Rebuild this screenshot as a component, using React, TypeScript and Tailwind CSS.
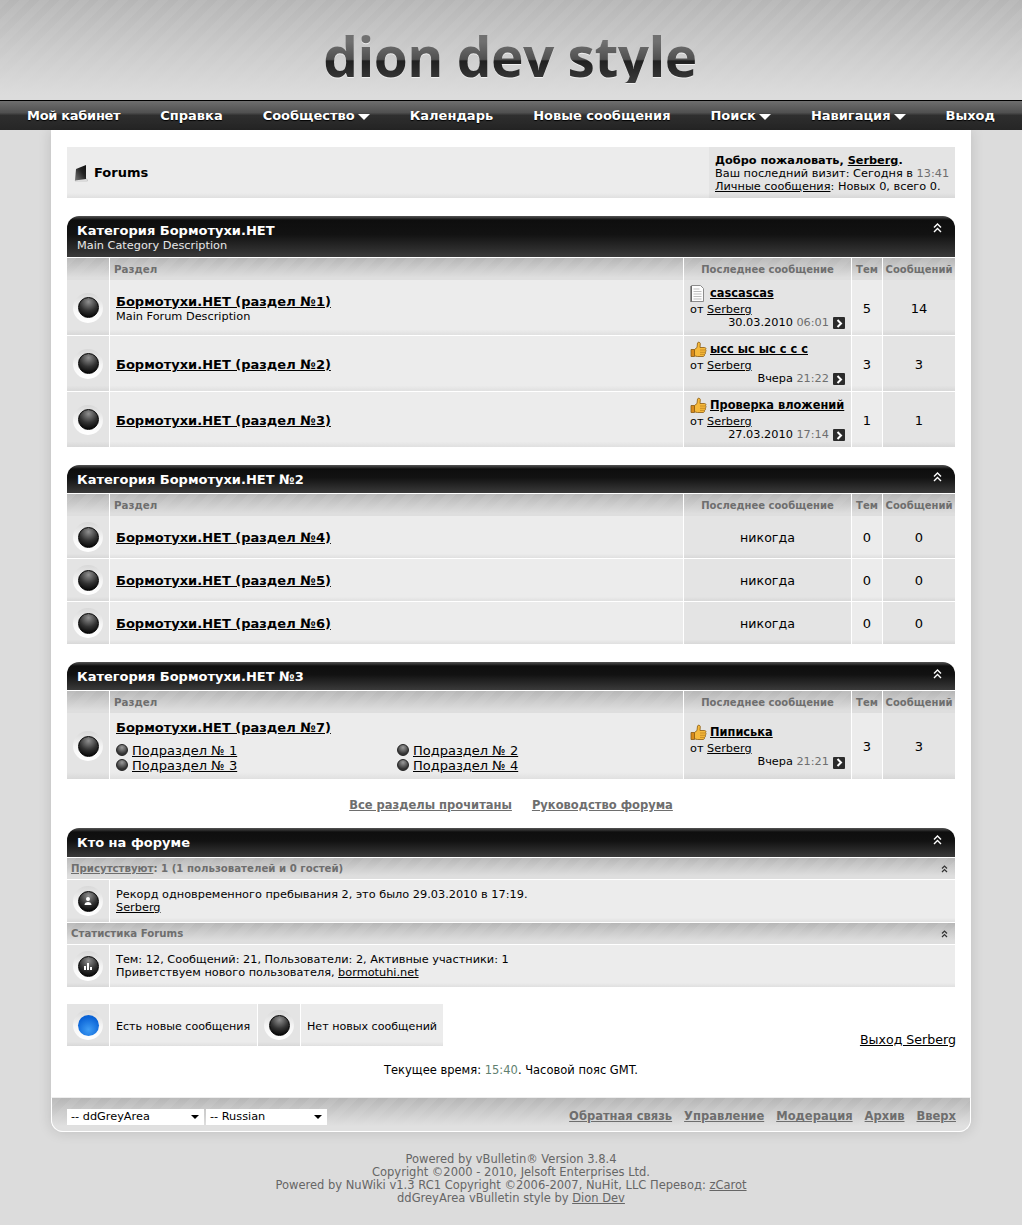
const stripes =
  "bg-[linear-gradient(rgba(220,220,220,0)_0%,rgba(220,220,220,0.6)_55%,#dcdcdc_95%),repeating-linear-gradient(135deg,#bababa_0px,#bababa_7px,#b6b6b6_7px,#b6b6b6_14px)]";
const thBg =
  "bg-[linear-gradient(rgba(224,224,224,0)_0%,#dedede_85%),repeating-linear-gradient(135deg,#bbbbbb_0px,#bbbbbb_7px,#b6b6b6_7px,#b6b6b6_14px)]";

function Ball({ kind = "dark", children }: { kind?: "dark" | "blue"; children?: React.ReactNode }) {
  return (
    <div className="w-[30px] h-[30px] rounded-full bg-[linear-gradient(#d8d8d8,#f6f6f6_55%,#ffffff)] flex items-center justify-center">
      <div
        className={
          kind === "blue"
            ? "w-[21px] h-[21px] rounded-full bg-[radial-gradient(circle_at_50%_70%,#3f9df5,#0a63d6_70%)] flex items-center justify-center"
            : "w-[21px] h-[21px] rounded-full bg-[radial-gradient(circle_at_50%_20%,#8f8f8f,#333333_50%,#080808_85%)] border border-black flex items-center justify-center"
        }
      >
        {children}
      </div>
    </div>
  );
}

function Chevrons({ small }: { small?: boolean }) {
  return small ? (
    <svg width="7" height="8" viewBox="0 0 7 8" fill="none" stroke="currentColor" strokeWidth="1.2">
      <path d="M1 3.500 3.500 1 6 3.500M1 7 3.500 4.500 6 7" />
    </svg>
  ) : (
    <svg width="9" height="10" viewBox="0 0 9 10" fill="none" stroke="currentColor" strokeWidth="1.4">
      <path d="M1 4.500 4.500 1 8 4.500M1 9 4.500 5.500 8 9" />
    </svg>
  );
}

function GoIcon() {
  return (
    <span className="inline-flex w-[12px] h-[12px] bg-[#2b2b2b] items-center justify-center align-[-2px] ml-1 rounded-[1px]">
      <svg width="7" height="9" viewBox="0 0 7 9" fill="none" stroke="#fff" strokeWidth="2">
        <path d="M1.500 1 5 4.500 1.500 8" />
      </svg>
    </span>
  );
}

function Thumb() {
  return (
    <svg width="17" height="17" viewBox="0 0 17 17" className="shrink-0">
      <path d="M1 8.500h3.500v7H1z" fill="#d98a1c" stroke="#8a5a10" strokeWidth="0.8" />
      <path
        d="M4.500 8.500 7 6.500 7.500 2C7.800.8 10 .9 10.300 2.500L10 6.500h4.500c1.500 0 1.900 1.500 1 2.200.8.700.7 2-.2 2.400.5.800.2 1.900-.7 2.200.2 1.100-.5 2.200-1.600 2.200H7.500c-1.200 0-2-.5-3-.8z"
        fill="#f6b93b"
        stroke="#8a5a10"
        strokeWidth="0.8"
      />
      <path d="M10 9h5M10 11.300h5M10 13.400h4" stroke="#b87d1a" strokeWidth="0.7" />
    </svg>
  );
}

function Doc() {
  return (
    <svg width="15" height="17" viewBox="0 0 15 17" className="shrink-0">
      <path d="M1.500.5h9l3 3v13h-12z" fill="#fdfdfd" stroke="#8c8c8c" />
      <path d="M1 1v16" stroke="#444" />
      <path d="M3.500 4h6M3.500 6.500h8M3.500 9h8M3.500 11.500h8M3.500 14h8" stroke="#bdbdbd" />
    </svg>
  );
}

const link = "underline text-black";

function NavItem({ label, drop, tight }: { label: string; drop?: boolean; tight?: boolean }) {
  return (
    <span
      className={`flex items-center gap-[3px] text-white font-bold text-[13px] [text-shadow:0_1px_1px_#000] ${
        tight ? "tracking-[-0.3px]" : ""
      }`}
    >
      {label}
      {drop && <span className="w-0 h-0 border-x-[6px] border-x-transparent border-t-[6px] border-t-white mt-[2px]" />}
    </span>
  );
}

function CatHeader({ title, desc, who }: { title: string; desc?: string; who?: boolean }) {
  return (
    <div
      className={`flex items-start justify-between bg-[linear-gradient(#555_0px,#0e0e0e_4px,#121212_45%,#3a3a3a_100%)] px-[10px] text-white rounded-t-[12px] ${
        desc ? "h-[41px] pt-[7px]" : who ? "h-[29px] pt-[7px]" : "h-[28px] pt-[7px]"
      }`}
    >
      <div>
        <div className="text-[13px] font-bold leading-[15px]">{title}</div>
        {desc && <div className="text-[11.3px] leading-[13px] mt-[1px] text-[#e8e8e8]">{desc}</div>}
      </div>
      <span className="mr-[3px]">
        <Chevrons />
      </span>
    </div>
  );
}

const cols = "grid grid-cols-[42px_573px_167px_30px_72px] gap-x-px";

function HeadRow() {
  return (
    <div className={`${cols} mt-px text-[10px] font-bold text-[#6e6e6e] h-[21px] leading-[23px]`}>
      <div className={thBg} />
      <div className={`${thBg} pl-[4px] text-[10.3px]`}>Раздел</div>
      <div className={`${thBg} text-center`}>Последнее сообщение</div>
      <div className={`${thBg} text-center`}>Тем</div>
      <div className={`${thBg} text-center`}>Сообщений</div>
    </div>
  );
}

const cellLight = "bg-[linear-gradient(#ececec_90%,#e0e0e0)]";
const cellDark = "bg-[linear-gradient(#e4e4e4_90%,#d8d8d8)]";

type Last = { icon: "doc" | "thumb"; title: string; date: string; time: string };

function LastPost({ p, low }: { p: Last; low?: boolean }) {
  return (
    <div className={`h-full flex flex-col justify-center pb-[1px] px-[6px] text-[11.3px] leading-[13px] ${low ? "pt-[2px]" : ""}`}>
      <div className="flex items-center gap-[4px] h-[17px]">
        {p.icon === "doc" ? <Doc /> : <Thumb />}
        <span className={`${link} font-bold text-[11.4px] ${p.icon === "doc" ? "ml-[1px]" : "-ml-[1px]"}`}>{p.title}</span>
      </div>
      <div className="mt-[1px]">
        от <span className={link}>Serberg</span>
      </div>
      <div className="text-right">
        {p.date} <span className="text-[#6e6e6e]">{p.time}</span>
        <GoIcon />
      </div>
    </div>
  );
}

function ForumRow({
  name,
  desc,
  last,
  topics,
  posts,
  h,
  children,
}: {
  name: string;
  desc?: string;
  last?: Last;
  topics: string;
  posts: string;
  h: string;
  children?: React.ReactNode;
}) {
  return (
    <div className={`${cols} mt-px ${h}`}>
      <div className={`${cellDark} flex items-center justify-center`}>
        <Ball />
      </div>
      <div className={`${cellLight} pl-[6px] flex flex-col justify-center ${last && !children ? "pt-[2px]" : ""}`}>
        <div className={`${link} font-bold text-[13px] leading-[15px]`}>{name}</div>
        {desc && <div className="text-[11.3px] leading-[14px] mt-[1px]">{desc}</div>}
        {children}
      </div>
      <div className={cellDark}>
        {last ? (
          <LastPost p={last} low={!!children} />
        ) : (
          <div className="h-full flex items-center justify-center pt-[2px] text-[12.6px]">никогда</div>
        )}
      </div>
      <div className={`${cellLight} flex items-center justify-center pt-[2px] text-[13px]`}>{topics}</div>
      <div className={`${cellDark} flex items-center justify-center pt-[2px] text-[13px]`}>{posts}</div>
    </div>
  );
}

function SubForum({ name }: { name: string }) {
  return (
    <div className="flex items-center gap-[4px] text-[13px] leading-[15px]">
      <span className="w-[12px] h-[12px] rounded-full bg-[radial-gradient(circle_at_50%_25%,#9a9a9a,#333_70%)] border border-[#222]" />
      <span className={link}>{name}</span>
    </div>
  );
}

function SubHead({ children }: { children: React.ReactNode }) {
  return (
    <div className={`mt-px h-[21px] ${thBg} flex items-center justify-between pl-[4px] pr-[7px] text-[10.2px] font-bold text-[#6e6e6e]`}>
      <span>{children}</span>
      <span className="text-[#333]">
        <Chevrons small />
      </span>
    </div>
  );
}

function InfoRow({ icon, children }: { icon: React.ReactNode; children: React.ReactNode }) {
  return (
    <div className="grid grid-cols-[42px_845px] gap-x-px mt-px h-[42px]">
      <div className={`${cellDark} flex items-center justify-center`}>
        <Ball>{icon}</Ball>
      </div>
      <div className={`${cellLight} pl-[6px] flex flex-col justify-center text-[11.3px] leading-[13px]`}>{children}</div>
    </div>
  );
}

export default function App() {
  return (
    <div className="min-h-[1225px] bg-[#dcdcdc] text-black font-['Verdana','DejaVu_Sans',sans-serif]">
      <header className={`h-[100px] flex items-center justify-center ${stripes}`}>
        <h1 className="font-['Open_Sans',sans-serif] font-bold text-[55px] leading-none mt-[10px] mr-[2px] text-transparent bg-clip-text bg-[linear-gradient(#707070_25%,#505050_57%,#202020_60%,#3c3c3c)] [filter:drop-shadow(0_1px_0_#efefef)] tracking-[-0.5px]">
          dion dev style
        </h1>
      </header>
      <nav className="h-[30px] border-t border-black bg-[linear-gradient(#6e6e6e,#505050_40%,#2e2e2e_50%,#262626)] flex items-center justify-between pl-[27px] pr-[27px]">
        <NavItem label="Мой кабинет" tight />
        <NavItem label="Справка" />
        <NavItem label="Сообщество" drop />
        <NavItem label="Календарь" />
        <NavItem label="Новые сообщения" />
        <NavItem label="Поиск" drop />
        <NavItem label="Навигация" drop />
        <NavItem label="Выход" />
      </nav>

      <div className="mx-auto w-[920px]">
        <main className="bg-white rounded-b-[12px] shadow-[0_0_14px_rgba(0,0,0,0.14)] pt-[17px] overflow-hidden">
          <div className="px-[16px]">
            <div className="flex h-[51px] bg-[linear-gradient(#ececec_90%,#e0e0e0)]">
              <div className="flex-1 flex items-center pl-[7px] gap-[6px] text-[13px] font-bold">
                <svg width="14" height="18" viewBox="0 0 14 18">
                  <defs>
                    <linearGradient id="bookFill" x1="0" y1="1" x2="1" y2="0">
                      <stop offset="0" stopColor="#777" />
                      <stop offset="0.6" stopColor="#222" />
                      <stop offset="1" stopColor="#111" />
                    </linearGradient>
                  </defs>
                  <path d="M1 17h12.500l-.5-2H2z" fill="#eee" stroke="#aaa" strokeWidth="0.5" />
                  <path d="M1 16.500 2 5 12 1v14z" fill="url(#bookFill)" />
                </svg>
                Forums
              </div>
              <div className="w-[246px] ml-[2px] bg-[linear-gradient(#e4e4e4_90%,#d8d8d8)] pl-[6px] pt-[7px] text-[11.3px] leading-[13px] whitespace-nowrap">
                <div className="font-bold">
                  Добро пожаловать, <span className={link}>Serberg</span>.
                </div>
                <div>
                  Ваш последний визит: Сегодня в <span className="text-[#6e6e6e]">13:41</span>
                </div>
                <div>
                  <span className={link}>Личные сообщения</span>: Новых 0, всего 0.
                </div>
              </div>
            </div>

            <div className="mt-[18px]">
              <CatHeader title="Категория Бормотухи.НЕТ" desc="Main Category Description" />
              <HeadRow />
              <ForumRow
                h="h-[55px]"
                name="Бормотухи.НЕТ (раздел №1)"
                desc="Main Forum Description"
                topics="5"
                posts="14"
                last={{ icon: "doc", title: "cascascas", date: "30.03.2010", time: "06:01" }}
              />
              <ForumRow
                h="h-[55px]"
                name="Бормотухи.НЕТ (раздел №2)"
                topics="3"
                posts="3"
                last={{ icon: "thumb", title: "ысс ыс ыс с с с", date: "Вчера", time: "21:22" }}
              />
              <ForumRow
                h="h-[55px]"
                name="Бормотухи.НЕТ (раздел №3)"
                topics="1"
                posts="1"
                last={{ icon: "thumb", title: "Проверка вложений", date: "27.03.2010", time: "17:14" }}
              />
            </div>

            <div className="mt-[18px]">
              <CatHeader title="Категория Бормотухи.НЕТ №2" />
              <HeadRow />
              <ForumRow h="h-[42px]" name="Бормотухи.НЕТ (раздел №4)" topics="0" posts="0" />
              <ForumRow h="h-[42px]" name="Бормотухи.НЕТ (раздел №5)" topics="0" posts="0" />
              <ForumRow h="h-[42px]" name="Бормотухи.НЕТ (раздел №6)" topics="0" posts="0" />
            </div>

            <div className="mt-[18px]">
              <CatHeader title="Категория Бормотухи.НЕТ №3" />
              <HeadRow />
              <ForumRow
                h="h-[66px]"
                name="Бормотухи.НЕТ (раздел №7)"
                topics="3"
                posts="3"
                last={{ icon: "thumb", title: "Пиписька", date: "Вчера", time: "21:21" }}
              >
                <div className="grid grid-cols-[281px_1fr] mt-[8px]">
                  <SubForum name="Подраздел № 1" />
                  <SubForum name="Подраздел № 2" />
                  <SubForum name="Подраздел № 3" />
                  <SubForum name="Подраздел № 4" />
                </div>
              </ForumRow>
            </div>

            <div className="flex justify-center gap-[20px] mt-[19px] h-[14px] text-[11.5px] leading-[14px] font-bold text-[#6e6e6e] underline">
              <span>Все разделы прочитаны</span>
              <span>Руководство форума</span>
            </div>

            <div className="mt-[16px]">
              <CatHeader title="Кто на форуме" who />
              <SubHead>
                <span className="underline">Присутствуют</span>: 1 (1 пользователей и 0 гостей)
              </SubHead>
              <InfoRow
                icon={
                  <svg width="10" height="10" viewBox="0 0 10 10" fill="#fff">
                    <circle cx="5" cy="3" r="2" />
                    <path d="M1.500 9c0-2 1.500-3 3.500-3s3.500 1 3.500 3z" />
                  </svg>
                }
              >
                <div>Рекорд одновременного пребывания 2, это было 29.03.2010 в 17:19.</div>
                <div>
                  <span className={link}>Serberg</span>
                </div>
              </InfoRow>
              <SubHead>Статистика Forums</SubHead>
              <InfoRow
                icon={
                  <svg width="10" height="10" viewBox="0 0 10 10" fill="#fff">
                    <path d="M1 5h2v4H1zM4 2h2v7H4zM7 6h2v3H7z" />
                  </svg>
                }
              >
                <div>Тем: 12, Сообщений: 21, Пользователи: 2, Активные участники: 1</div>
                <div>
                  Приветствуем нового пользователя, <span className={link}>bormotuhi.net</span>
                </div>
              </InfoRow>
            </div>

            <div className="flex items-end justify-between mt-[17px]">
              <div className="flex h-[42px] text-[11.1px]">
                <div className={`${cellDark} w-[42px] flex items-center justify-center`}>
                  <Ball kind="blue" />
                </div>
                <div className={`${cellLight} ml-px w-[147px] flex items-center pt-[4px] pl-[6px]`}>Есть новые сообщения</div>
                <div className={`${cellDark} ml-px w-[42px] flex items-center justify-center`}>
                  <Ball />
                </div>
                <div className={`${cellLight} ml-px w-[142px] flex items-center pt-[4px] pl-[6px]`}>Нет новых сообщений</div>
              </div>
              <span className={`${link} text-[12.6px] leading-[15px] -mr-px -mb-px`}>Выход Serberg</span>
            </div>

            <div className="text-center text-[11.5px] leading-[13px] mt-[18px]">
              Текущее время: <span className="text-[#5f7f70]">15:40</span>. Часовой пояс GMT.
            </div>
          </div>

          <div className="mt-[20px] h-[35px] pt-[5px] bg-[linear-gradient(rgba(226,226,226,0)_0%,#e0e0e0_85%),repeating-linear-gradient(135deg,#bbbbbb_0px,#bbbbbb_7px,#b6b6b6_7px,#b6b6b6_14px)] border border-t-[#eeeeee] border-white flex items-center justify-between pl-[15px] pr-[14px] rounded-b-[12px]">
            <div className="flex gap-[2px]">
              <div className="w-[137px] h-[16px] bg-white flex items-center justify-between pl-[4px] pr-[5px] text-[11.3px]">
                -- ddGreyArea
                <span className="w-0 h-0 border-x-[4px] border-x-transparent border-t-[4px] border-t-black" />
              </div>
              <div className="w-[121px] h-[16px] bg-white flex items-center justify-between pl-[4px] pr-[5px] text-[11.3px]">
                -- Russian
                <span className="w-0 h-0 border-x-[4px] border-x-transparent border-t-[4px] border-t-black" />
              </div>
            </div>
            <div className="flex gap-[12px] text-[11.5px] font-bold text-[#6e6e6e] underline">
              <span>Обратная связь</span>
              <span>Управление</span>
              <span>Модерация</span>
              <span>Архив</span>
              <span>Вверх</span>
            </div>
          </div>
        </main>
      </div>

      <footer className="mt-[21px] text-center text-[11.5px] leading-[13px] text-[#666]">
        <div>Powered by vBulletin® Version 3.8.4</div>
        <div>Copyright ©2000 - 2010, Jelsoft Enterprises Ltd.</div>
        <div>
          Powered by NuWiki v1.3 RC1 Copyright ©2006-2007, NuHit, LLC Перевод: <span className="underline">zCarot</span>
        </div>
        <div>
          ddGreyArea vBulletin style by <span className="underline">Dion Dev</span>
        </div>
      </footer>
    </div>
  );
}
